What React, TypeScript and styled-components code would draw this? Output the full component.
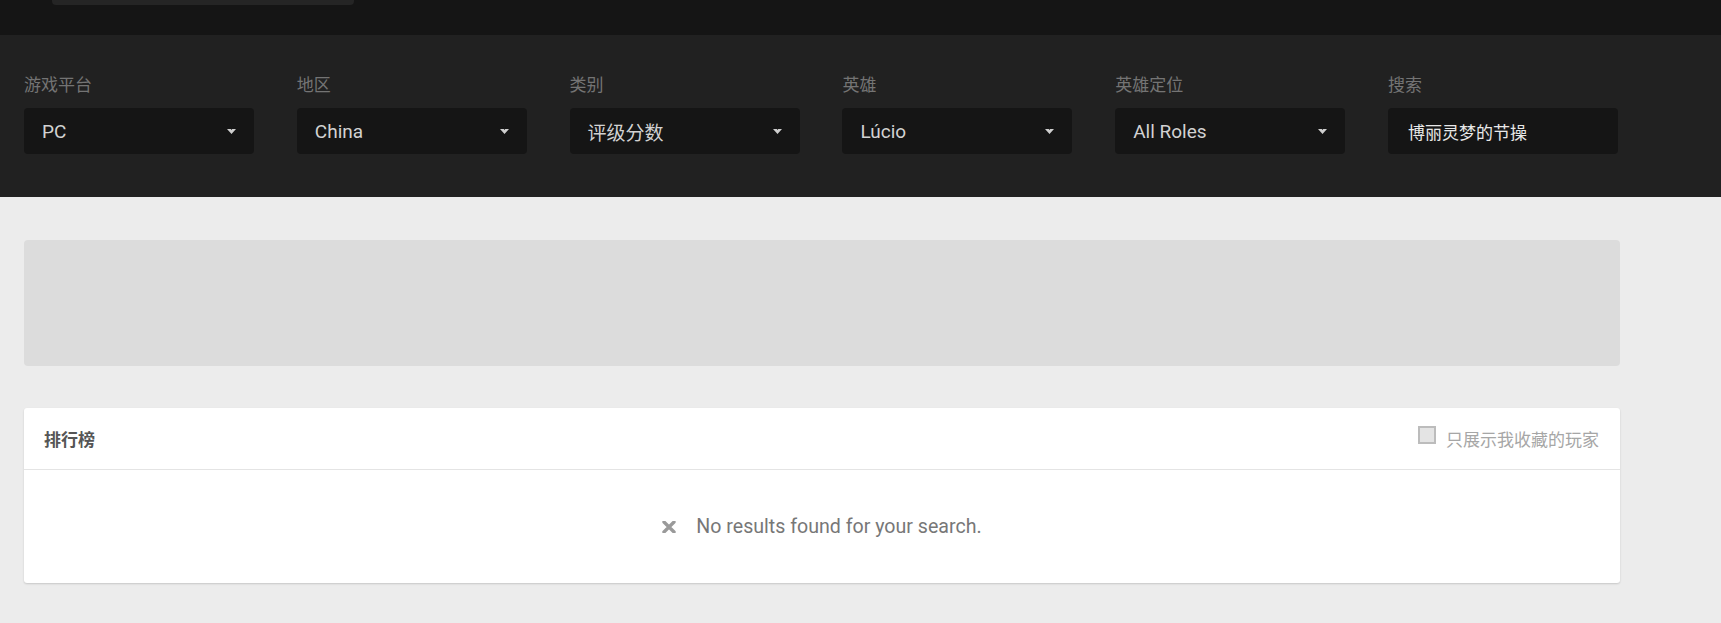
import React from "react";
import styled, { createGlobalStyle } from "styled-components";

const GlobalStyle = createGlobalStyle`
  html, body {
    margin: 0;
    padding: 0;
    background: #ececec;
    font-family: Roboto, "Noto Sans CJK SC", sans-serif;
  }
  * { box-sizing: border-box; }
`;

const TopBar = styled.div`
  height: 35px;
  background: #151515;
  padding-left: 52px;
`;

const TopSearchStub = styled.div`
  width: 302px;
  height: 5px;
  background: #252525;
  border-radius: 0 0 4px 4px;
`;

const FilterSection = styled.div`
  background: #212121;
  padding: 40px 101px 43px 24px;
`;

const FilterGrid = styled.div`
  display: grid;
  grid-template-columns: repeat(6, 230px);
  column-gap: 42.8px;
`;

const Field = styled.div`
  display: flex;
  flex-direction: column;
`;

const Label = styled.label`
  display: block;
  height: 20px;
  line-height: 20px;
  font-size: 17px;
  color: #747474;
  margin-bottom: 13px;
`;

const SelectBox = styled.div`
  height: 46px;
  background: #151515;
  border-radius: 4px;
  display: flex;
  align-items: center;
  justify-content: space-between;
  padding: 0 18px;
  color: #d2d2d2;
  font-size: 19px;
`;

const SearchBox = styled.div`
  height: 46px;
  background: #151515;
  border-radius: 4px;
  display: flex;
  align-items: center;
  padding: 0 20px;
  color: #e8e8e8;
  font-size: 17px;
`;

const Main = styled.div`
  padding: 43px 101px 40px 24px;
  display: flex;
  flex-direction: column;
  gap: 42px;
`;

const Banner = styled.div`
  height: 126px;
  background: #dcdcdc;
  border-radius: 4px;
`;

const Card = styled.div`
  background: #fff;
  border-radius: 3px;
  box-shadow: 0 1px 2px rgba(0, 0, 0, 0.16);
`;

const CardHeader = styled.div`
  height: 62px;
  border-bottom: 1px solid #e4e4e4;
  display: flex;
  align-items: center;
  justify-content: space-between;
  padding: 0 21px 1px 20px;
`;

const CardTitle = styled.div`
  font-size: 17px;
  font-weight: 700;
  color: #555;
`;

const Toggle = styled.label`
  display: flex;
  align-items: center;
  gap: 10px;
  font-size: 17px;
  color: #a6a6a6;
`;

const Check = styled.span`
  width: 18px;
  height: 18px;
  border: 2px solid #bcbcbc;
  background: #e4e4e4;
  margin-bottom: 6px;
`;

const CardBody = styled.div`
  height: 113px;
  display: flex;
  align-items: center;
  justify-content: center;
  gap: 20px;
  color: #777;
  font-size: 19.6px;
`;

const Arrow = () => (
  <svg width="9" height="5" viewBox="0 0 9 5">
    <path d="M0 0 H3.8 L4.5 1 L5.2 0 H9 L4.5 5 Z" fill="#cfcfcf" />
  </svg>
);

const XIcon = () => (
  <svg width="14" height="12" viewBox="0 0 14 12">
    <path
      d="M2 1 L12 11 M12 1 L2 11"
      stroke="#9a9a9a"
      strokeWidth="3.4"
      strokeLinecap="round"
    />
  </svg>
);

const filters = [
  { label: "游戏平台", value: "PC" },
  { label: "地区", value: "China" },
  { label: "类别", value: "评级分数" },
  { label: "英雄", value: "Lúcio" },
  { label: "英雄定位", value: "All Roles" },
];

export default function App() {
  return (
    <>
      <GlobalStyle />
      <TopBar>
        <TopSearchStub />
      </TopBar>
      <FilterSection>
        <FilterGrid>
          {filters.map((f) => (
            <Field key={f.label}>
              <Label>{f.label}</Label>
              <SelectBox>
                <span>{f.value}</span>
                <Arrow />
              </SelectBox>
            </Field>
          ))}
          <Field>
            <Label>搜索</Label>
            <SearchBox>博丽灵梦的节操</SearchBox>
          </Field>
        </FilterGrid>
      </FilterSection>
      <Main>
        <Banner />
        <Card>
          <CardHeader>
            <CardTitle>排行榜</CardTitle>
            <Toggle>
              <Check />
              只展示我收藏的玩家
            </Toggle>
          </CardHeader>
          <CardBody>
            <XIcon />
            <span>No results found for your search.</span>
          </CardBody>
        </Card>
      </Main>
    </>
  );
}
